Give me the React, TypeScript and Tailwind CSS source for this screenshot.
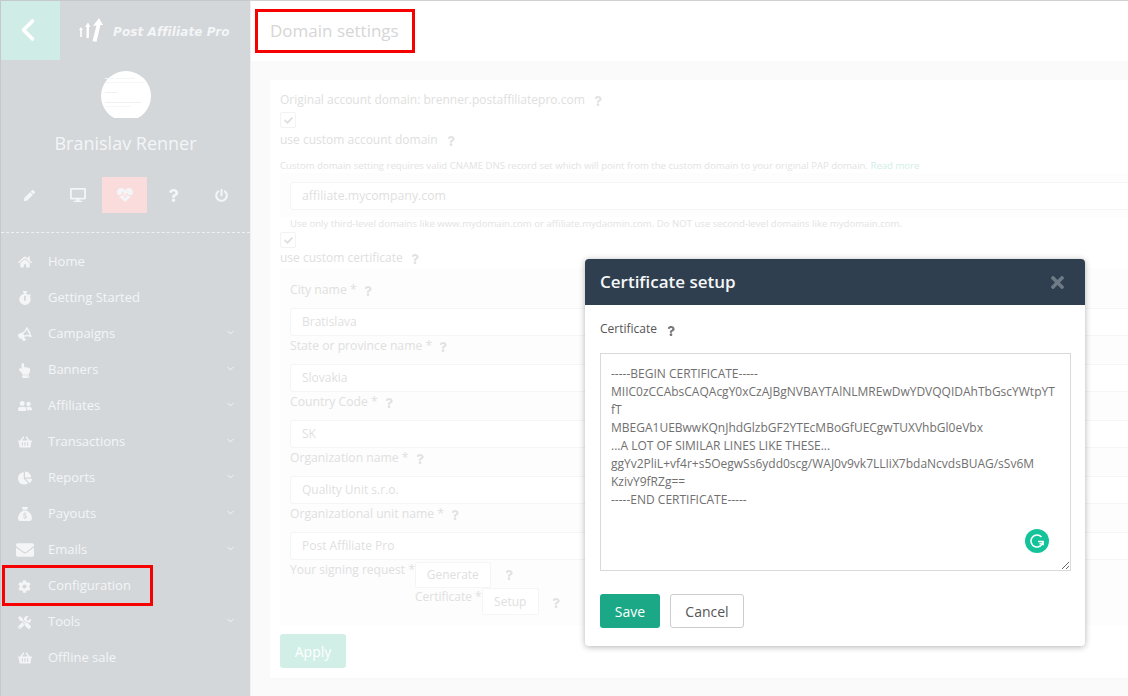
import React from "react";
import {
  FaHome, FaStopwatch, FaBullhorn, FaHandPointUp, FaUserFriends, FaShoppingBasket, FaChartPie,
  FaEnvelope, FaCog, FaTools, FaPen, FaDesktop, FaHeartbeat, FaQuestion, FaPowerOff, FaTimes, FaCheck,
} from "react-icons/fa";
import { FaSackDollar } from "react-icons/fa6";
import { ChevronDown, ChevronLeft } from "lucide-react";

const nav: [string, React.ComponentType<{ className?: string }>, boolean, string][] = [
  ["Home", FaHome, false, "text-[14px]"],
  ["Getting Started", FaStopwatch, false, "text-[14px]"],
  ["Campaigns", FaBullhorn, true, "text-[13px] -rotate-[25deg]"],
  ["Banners", FaHandPointUp, true, "text-[15px]"],
  ["Affiliates", FaUserFriends, true, "text-[14px]"],
  ["Transactions", FaShoppingBasket, true, "text-[14px]"],
  ["Reports", FaChartPie, true, "text-[14px]"],
  ["Payouts", FaSackDollar, true, "text-[14px]"],
  ["Emails", FaEnvelope, true, "text-[18px]"],
  ["Configuration", FaCog, false, "text-[13px]"],
  ["Tools", FaTools, true, "text-[13px]"],
  ["Offline sale", FaShoppingBasket, false, "text-[14px]"],
];

const cert = `-----BEGIN CERTIFICATE-----
MIIC0zCCAbsCAQAcgY0xCzAJBgNVBAYTAlNLMREwDwYDVQQIDAhTbGscYWtpYT
fT
MBEGA1UEBwwKQnJhdGlzbGF2YTEcMBoGfUECgwTUXVhbGl0eVbx
...A LOT OF SIMILAR LINES LIKE THESE...
ggYv2PliL+vf4r+s5OegwSs6ydd0scg/WAJ0v9vk7LLIiX7bdaNcvdsBUAG/sSv6M
KzivY9fRZg==
-----END CERTIFICATE-----`;

function Help({ className = "" }: { className?: string }) {
  return <FaQuestion className={`text-[10px] text-[#e2e2e2] shrink-0 ${className}`} />;
}

function Check() {
  return (
    <div className="w-[16px] h-[16px] border border-[#f3f3f3] rounded-[2px] flex items-center justify-center">
      <FaCheck className="text-[9px] text-[#dedede]" />
    </div>
  );
}

function Field({ label, value }: { label: string; value: string }) {
  return (
    <div className="h-[56px]">
      <div className="h-[20px] mb-[8px] flex items-center">
        <span className="text-[12.2px] text-[#e0e0e0]">{label}</span>
        <Help className="ml-[6px] mt-[2px]" />
      </div>
      <div className="h-[28px] bg-white border border-[#f5f5f5] rounded-[3px] px-[11px] flex items-center text-[12px] text-[#dfdfdf]">
        {value}
      </div>
    </div>
  );
}

export default function App() {
  return (
    <div
      className="relative w-[1128px] h-[696px] overflow-hidden flex bg-[#fafafa]"
      style={{ fontFamily: '"Open Sans", sans-serif' }}
    >
      <aside className="w-[251px] shrink-0 h-full bg-[#d3d7da] border-l border-t border-r border-l-[#c6c9cb] border-t-[#c6c9cb] border-r-[#eef0f1] flex flex-col text-[#f4f5f6]">
        <div className="flex h-[59px] shrink-0">
          <div className="w-[59px] bg-[#cfece6] flex items-center justify-center pr-[6px] pb-[2px]">
            <ChevronLeft className="text-white w-[36px] h-[36px]" strokeWidth={2.4} />
          </div>
          <div className="flex items-center pl-[17px] gap-[9px]">
            <svg width="27" height="26" viewBox="0 0 27 26" fill="white">
              <path d="M2 12 L4 9 L6 12 L4.8 12 L4.8 19 L3.2 19 L3.2 12 Z" />
              <path d="M8 9 L11 4.5 L13.5 9 L12 9 L11.8 20 L9.5 20 L9.6 9 Z" />
              <path d="M16 8 L22 0 L26 7 L23.4 7 L19.5 24 L15.5 23 L19.5 7.5 Z" />
            </svg>
            <span
              className="text-[12px] font-bold italic whitespace-nowrap tracking-[0.1px] mt-[3px]"
              style={{ fontFamily: '"DejaVu Sans", sans-serif' }}
            >
              Post Affiliate Pro
            </span>
          </div>
        </div>
        <div className="h-[47px] shrink-0 flex justify-center mt-[11px]">
          <div className="w-[50px] h-[47px] overflow-hidden">
            <div className="w-[50px] h-[50px] bg-white rounded-full flex flex-col gap-[3px] pt-[7px] pl-[4px]">
              <div className="w-[30px] h-px bg-[#f5f6f7]" />
              <div className="w-[40px] h-px bg-[#f5f6f7]" />
              <div className="w-[12px] h-px bg-[#eff0f1] mt-[6px]" />
              <div className="w-[36px] h-px bg-[#eff0f1] mt-[6px]" />
              <div className="w-[26px] h-px bg-[#f5f6f7]" />
            </div>
          </div>
        </div>
        <div className="text-center text-[18px] leading-[24px] mt-[13px] shrink-0">Branislav Renner</div>
        <div className="flex items-center h-[36px] mt-[22px] pl-[4px] shrink-0">
          <div className="w-[48px] flex justify-center"><FaPen className="text-[11px]" /></div>
          <div className="w-[49px] flex justify-center"><FaDesktop className="text-[16px]" /></div>
          <div className="w-[45px] h-[36px] bg-[#fbdcdd] flex items-center justify-center"><FaHeartbeat className="text-[16px]" /></div>
          <div className="w-[52px] flex justify-center"><FaQuestion className="text-[13px]" /></div>
          <div className="w-[44px] flex justify-center"><FaPowerOff className="text-[13px]" /></div>
        </div>
        <div className="mt-[19px] border-t border-dashed border-[#eef0f1] shrink-0" />
        <nav className="pt-[11px] flex flex-col">
          {nav.map(([label, Icon, chev, size]) => (
            <div key={label} className="h-[36px] flex items-center shrink-0">
              <div className="w-[47px] flex justify-center">
                <Icon className={size} />
              </div>
              <span className="text-[13px] flex-1">{label}</span>
              {chev && <ChevronDown className="w-[11px] h-[11px] mr-[14px] mb-[4px]" strokeWidth={2} />}
            </div>
          ))}
        </nav>
      </aside>

      <main className="flex-1 min-w-0 flex flex-col overflow-hidden">
        <header className="h-[61px] shrink-0 bg-white border-t border-[#d0d0d0] pl-[19px] flex items-center text-[17px] text-[#d6d6d6]">
          Domain settings
        </header>
        <div className="pl-[19px] pt-[19px]">
          <section className="w-[900px] h-[598px] bg-white pl-[10px] pt-[10px] shadow-[0_1px_2px_rgba(0,0,0,0.02)]">
            <div className="h-[20px] flex items-center text-[12px] text-[#e0e0e0]">
              Original account domain: brenner.postaffiliatepro.com
              <Help className="ml-[8px] mt-[2px]" />
            </div>
            <div className="mt-[2px]"><Check /></div>
            <div className="h-[20px] mt-[2px] flex items-center text-[12px] text-[#e0e0e0]">
              use custom account domain
              <Help className="ml-[8px] mt-[2px]" />
            </div>
            <div className="h-[14px] mt-[9px] text-[9.6px] leading-[14px] text-[#e3e3e3] whitespace-nowrap">
              Custom domain setting requires valid CNAME DNS record set which will point from the custom domain to your original PAP domain. <span className="text-[#d1eee7]">Read more</span>
            </div>
            <div className="h-[44px] bg-[#fdfdfd] pl-[10px] pt-[9px]">
              <div className="h-[28px] bg-white border border-[#f5f5f5] rounded-[3px] px-[11px] flex items-center text-[12.3px] text-[#dfdfdf]">
                affiliate.mycompany.com
              </div>
            </div>
            <div className="h-[14px] pl-[10px] text-[9.6px] leading-[14px] text-[#e3e3e3] whitespace-nowrap">
              Use only third-level domains like www.mydomain.com or affiliate.mydaomin.com. Do NOT use second-level domains like mydomain.com.
            </div>
            <div className="mt-[1px]"><Check /></div>
            <div className="h-[20px] flex items-center text-[12px] text-[#e0e0e0]">
              use custom certificate
              <Help className="ml-[7px] mt-[2px]" />
            </div>
            <div className="h-[357px] bg-[#fdfdfd] pl-[10px] pt-[12px]">
              <Field label="City name *" value="Bratislava" />
              <Field label="State or province name *" value="Slovakia" />
              <Field label="Country Code *" value="SK" />
              <Field label="Organization name *" value="Quality Unit s.r.o." />
              <Field label="Organizational unit name *" value="Post Affiliate Pro" />
              <div className="mt-[1px] h-[27px] flex items-start text-[12px] leading-[18px] text-[#e0e0e0]">
                <span>Your signing request *</span>
                <div className="mt-[1px] w-[76px] h-[26px] bg-white border border-[#f5f5f5] rounded-[2px] flex items-center justify-center">Generate</div>
                <Help className="ml-[13px] mt-[9px]" />
              </div>
              <div className="flex items-start text-[12px] leading-[18px] text-[#e0e0e0] pl-[125px]">
                <span>Certificate *</span>
                <div className="w-[57px] h-[27px] bg-white border border-[#f5f5f5] rounded-[2px] flex items-center justify-center">Setup</div>
                <Help className="ml-[12px] mt-[10px]" />
              </div>
            </div>
            <div className="mt-[9px] w-[66px] h-[34px] bg-[#d1eee7] rounded-[3px] text-white text-[14px] flex items-center justify-center">Apply</div>
          </section>
        </div>
      </main>

      {/* highlight frames lying over the page */}
      <div className="absolute left-[255px] top-[9px] w-[160px] h-[44px] border-[3px] border-[#f70000]" />
      <div className="absolute left-[2px] top-[565px] w-[151px] h-[41px] border-[3px] border-[#f70000]" />

      {/* modal */}
      <div className="absolute left-[585px] top-[259px] w-[500px] h-[387px] bg-white rounded-[4px] shadow-[0_1px_6px_rgba(0,0,0,0.3)] flex flex-col">
        <div className="h-[46px] shrink-0 bg-[#2f3f4f] rounded-t-[4px] pl-[15px] pr-[18px] flex items-center justify-between">
          <span className="text-[17px] font-semibold text-[#f6f7f8]">Certificate setup</span>
          <FaTimes className="text-[19px] text-[#6e7a85]" />
        </div>
        <div className="pl-[15px] pr-[14px] pt-[14px] flex-1 flex flex-col">
          <div className="h-[20px] flex items-center text-[12px] text-[#555]">
            Certificate
            <FaQuestion className="text-[10px] text-[#777] ml-[9px] mt-[3px]" />
          </div>
          <div className="relative mt-[14px]">
            <textarea
              readOnly
              wrap="off"
              defaultValue={cert}
              className="block w-[471px] h-[218px] border border-[#d9d9d9] pl-[10px] pt-[11px] pr-[10px] text-[12px] leading-[18px] text-[#707070] resize overflow-hidden outline-none"
            />
            <div className="absolute left-[425px] top-[176px] w-[24px] h-[24px] rounded-full bg-[#15c39a] flex items-center justify-center">
              <svg width="14" height="14" viewBox="0 0 14 14" fill="none" stroke="white" strokeWidth="1.6">
                <path d="M11.5 3 A6 6 0 1 0 13 7.5 L8 7.5" />
                <path d="M9.5 9.5 L13 10.5 L13 7.5" />
              </svg>
            </div>
          </div>
          <div className="flex gap-[10px] mt-[23px]">
            <div className="w-[60px] h-[34px] bg-[#1aa886] rounded-[3px] text-white text-[14px] flex items-center justify-center">Save</div>
            <div className="w-[74px] h-[34px] bg-white border border-[#ccc] rounded-[3px] text-[#555] text-[14px] flex items-center justify-center">Cancel</div>
          </div>
        </div>
      </div>
    </div>
  );
}
